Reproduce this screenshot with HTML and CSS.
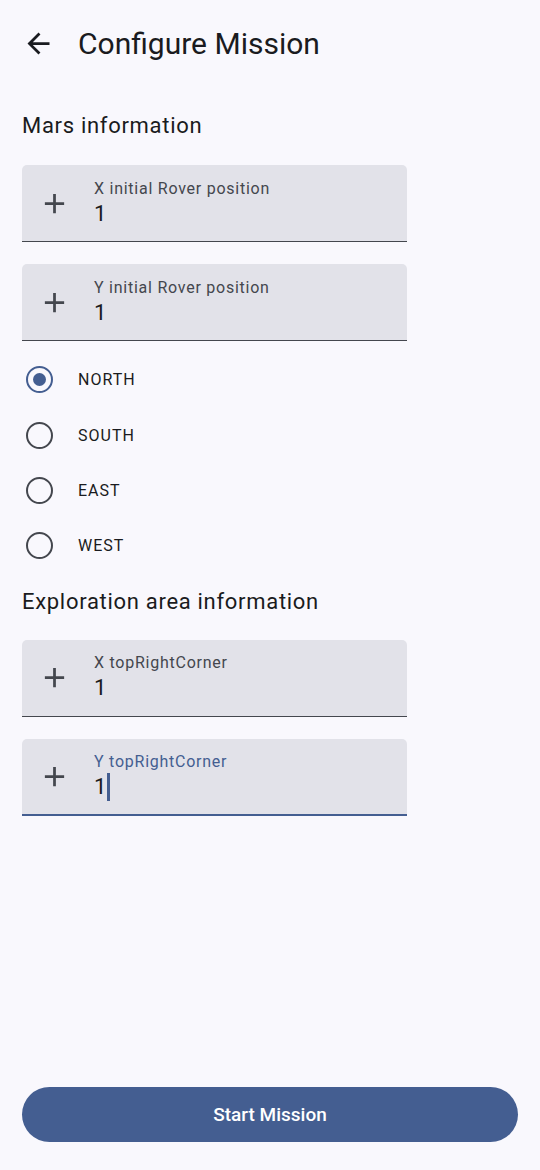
FILE: index.html
```html
<!DOCTYPE html>
<html>
<head>
<meta charset="utf-8">
<link rel="stylesheet" href="styles.css">
</head>
<body>
<div class="screen">
  <header class="topbar">
    <svg class="back" viewBox="0 0 24 24" width="33" height="33"><path d="M20 11H7.83l5.59-5.59L12 4l-8 8 8 8 1.41-1.41L7.83 13H20v-2z" fill="#1a1b20"/></svg>
    <h1 class="title">Configure Mission</h1>
  </header>
  <main class="content">
    <h2 class="section">Mars information</h2>
    <div class="field">
      <svg class="plus" viewBox="0 0 24 24" width="33" height="33"><path d="M19 13h-6v6h-2v-6H5v-2h6V5h2v6h6v2z" fill="#44474e"/></svg>
      <div class="field-text">
        <div class="label">X initial Rover position</div>
        <div class="value">1</div>
      </div>
    </div>
    <div class="field">
      <svg class="plus" viewBox="0 0 24 24" width="33" height="33"><path d="M19 13h-6v6h-2v-6H5v-2h6V5h2v6h6v2z" fill="#44474e"/></svg>
      <div class="field-text">
        <div class="label">Y initial Rover position</div>
        <div class="value">1</div>
      </div>
    </div>
    <div class="radios">
      <div class="radio-row"><span class="radio checked"></span><span class="radio-label">NORTH</span></div>
      <div class="radio-row"><span class="radio"></span><span class="radio-label">SOUTH</span></div>
      <div class="radio-row"><span class="radio"></span><span class="radio-label">EAST</span></div>
      <div class="radio-row"><span class="radio"></span><span class="radio-label">WEST</span></div>
    </div>
    <h2 class="section section2">Exploration area information</h2>
    <div class="field">
      <svg class="plus" viewBox="0 0 24 24" width="33" height="33"><path d="M19 13h-6v6h-2v-6H5v-2h6V5h2v6h6v2z" fill="#44474e"/></svg>
      <div class="field-text">
        <div class="label">X topRightCorner</div>
        <div class="value">1</div>
      </div>
    </div>
    <div class="field focused">
      <svg class="plus" viewBox="0 0 24 24" width="33" height="33"><path d="M19 13h-6v6h-2v-6H5v-2h6V5h2v6h6v2z" fill="#44474e"/></svg>
      <div class="field-text">
        <div class="label">Y topRightCorner</div>
        <div class="value">1<span class="cursor"></span></div>
      </div>
    </div>
  </main>
  <div class="footer">
    <button class="start">Start Mission</button>
  </div>
</div>
</body>
</html>
```
FILE: styles.css
```css
* { box-sizing: border-box; }
html, body { margin: 0; padding: 0; }
body {
  background: #f9f8fd;
  font-family: Roboto, "Noto Sans", sans-serif;
  color: #1a1b20;
}
.screen {
  width: 540px;
  height: 1170px;
  display: flex;
  flex-direction: column;
}
.topbar {
  height: 88px;
  display: flex;
  align-items: center;
  padding-left: 22px;
  padding-bottom: 2px;
}
.back { display: block; margin-right: 23px; }
.title {
  margin: 0;
  font-size: 30px;
  font-weight: 400;
  color: #1a1b20;
}
.content {
  padding: 0 22px;
  flex: 1;
}
.section {
  margin: 0;
  font-size: 22px;
  font-weight: 400;
  letter-spacing: 0.7px;
  height: 77px;
  padding-top: 25px;
  color: #1a1b20;
}
.section2 { height: 66px; padding-top: 15px; }
.field {
  width: 385px;
  height: 77px;
  background: #e2e2e9;
  border-radius: 5px 5px 0 0;
  border-bottom: 1.4px solid #44474e;
  display: flex;
  align-items: center;
  margin-bottom: 22px;
}
.plus { margin-left: 16px; margin-right: 23px; display: block; flex: none; }
.field-text { display: flex; flex-direction: column; padding-top: 1px; }
.label {
  font-size: 16px;
  color: #44474e;
  letter-spacing: 0.75px;
  line-height: 19px;
  margin-bottom: 1px;
}
.value {
  font-size: 22px;
  line-height: 30px;
  color: #1a1b20;
  display: flex;
  align-items: center;
}
.focused { border-bottom: 2.8px solid #445e91; }
.focused .label { color: #445e91; }
.cursor {
  display: inline-block;
  width: 2.5px;
  height: 28px;
  background: #445e91;
  margin-left: 1px;
}
.radios { margin-top: -11px; }
.radio-row {
  height: 55.4px;
  display: flex;
  align-items: center;
}
.radio {
  width: 27px;
  height: 27px;
  border-radius: 50%;
  border: 2.7px solid #44474e;
  margin-left: 4px;
  margin-right: 25px;
  display: flex;
  align-items: center;
  justify-content: center;
}
.radio.checked { border-color: #445e91; }
.radio.checked::after {
  content: "";
  width: 13.5px;
  height: 13.5px;
  border-radius: 50%;
  background: #445e91;
}
.radio-label {
  font-size: 16px;
  letter-spacing: 1px;
  color: #1a1b20;
}
.footer { padding: 0 22px 28px; }
.start {
  width: 496px;
  height: 55px;
  border: none;
  border-radius: 28px;
  background: #445e91;
  color: #ffffff;
  font-family: Roboto, sans-serif;
  font-size: 19px;
  font-weight: 500;
}
```
